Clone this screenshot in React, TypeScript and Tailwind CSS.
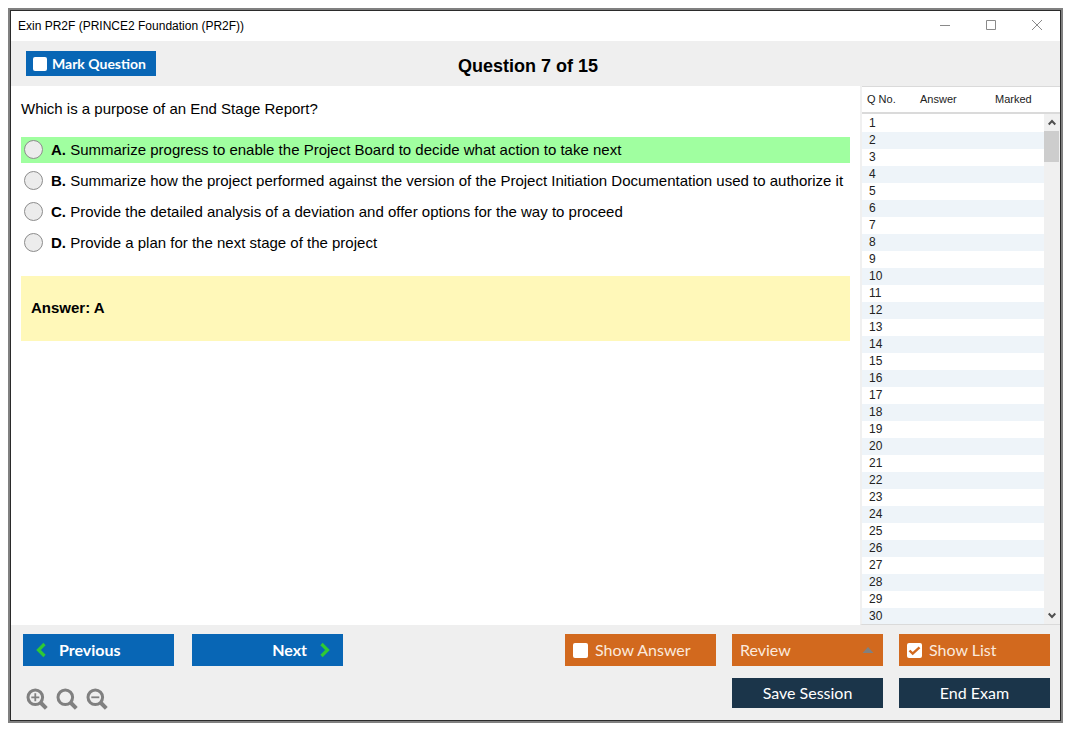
import { useState } from 'react';
import type { ReactNode } from 'react';

interface Option {
  letter: string;
  text: string;
  correct?: boolean;
}

const options: Option[] = [
  { letter: 'A', text: 'Summarize progress to enable the Project Board to decide what action to take next', correct: true },
  { letter: 'B', text: 'Summarize how the project performed against the version of the Project Initiation Documentation used to authorize it' },
  { letter: 'C', text: 'Provide the detailed analysis of a deviation and offer options for the way to proceed' },
  { letter: 'D', text: 'Provide a plan for the next stage of the project' },
];

const questionNumbers = Array.from({ length: 30 }, (_, i) => i + 1);

function Magnifier({ children }: { children?: ReactNode }) {
  return (
    <svg viewBox="0 0 22 22" className="h-[22px] w-[22px]" fill="none" stroke="#808080">
      <circle cx="9.3" cy="9.3" r="7.3" strokeWidth="3" />
      <path d="M14.5 14.5l5.8 5.8" strokeWidth="4" />
      {children}
    </svg>
  );
}

function CheckBox({ checked, onChange, small }: { checked: boolean; onChange: () => void; small?: boolean }) {
  return (
    <span className="grid place-items-center">
      <input
        type="checkbox"
        checked={checked}
        onChange={onChange}
        className={`col-start-1 row-start-1 appearance-none rounded-xs bg-white ${small ? 'h-[14px] w-[14px]' : 'h-[15px] w-[15px]'}`}
      />
      {checked && (
        <svg viewBox="0 0 15 15" className="pointer-events-none col-start-1 row-start-1 h-[15px] w-[15px]" fill="none" stroke="#d2691e" strokeWidth="2.4">
          <path d="M2.5 7.5l3.2 3.2 6.8-6.4" />
        </svg>
      )}
    </span>
  );
}

function ScrollBar() {
  return (
    <div className="flex w-4 flex-col bg-[#f0f0f0]">
      <div className="h-7 shrink-0 border-t border-b-2 border-[#dadada] bg-white" />
      <button aria-label="Scroll up" className="flex h-[17px] shrink-0 items-center justify-center">
        <svg viewBox="0 0 8 7" className="h-[7px] w-2" fill="none" stroke="#505050" strokeWidth="2">
          <path d="M0.7 5.5L4 2l3.3 3.5" />
        </svg>
      </button>
      <div className="mr-px h-[31px] bg-[#cdcdcd]" />
      <button aria-label="Scroll down" className="mt-auto flex h-[17px] shrink-0 items-center justify-center">
        <svg viewBox="0 0 8 7" className="h-[7px] w-2" fill="none" stroke="#505050" strokeWidth="2">
          <path d="M0.7 1.5L4 5l3.3-3.5" />
        </svg>
      </button>
    </div>
  );
}

export default function App() {
  const [marked, setMarked] = useState(false);
  const [showAnswer, setShowAnswer] = useState(false);
  const [showList, setShowList] = useState(true);
  const [selected, setSelected] = useState('');

  return (
    <div className="h-screen bg-white pt-2 pr-3 pb-3 pl-2 font-['Liberation_Sans',Arial,sans-serif] text-black">
      <div className="h-full border-2 border-[#808080]">
        <div className="flex h-full flex-col border border-[#2b2b2b] bg-[#efefef]">
          {/* Title bar */}
          <header className="flex h-[30px] shrink-0 items-center justify-between bg-white pr-4 pl-[7px]">
            <span className="text-xs">Exin PR2F (PRINCE2 Foundation (PR2F))</span>
            <div className="flex gap-8">
              <button aria-label="Minimize" className="flex w-[14px] items-center justify-center">
                <svg viewBox="0 0 12 12" className="h-3 w-3" stroke="#8a8a8a">
                  <path d="M1 5.5h10" />
                </svg>
              </button>
              <button aria-label="Maximize" className="flex w-[14px] items-center justify-center">
                <svg viewBox="0 0 12 12" className="h-3 w-3" fill="none" stroke="#8a8a8a">
                  <path d="M1.5 0.5h9v9h-9z" />
                </svg>
              </button>
              <button aria-label="Close" className="flex w-[14px] items-center justify-center">
                <svg viewBox="0 0 12 12" className="h-3 w-3" stroke="#8a8a8a">
                  <path d="M1 0l10 10M11 0L1 10" />
                </svg>
              </button>
            </div>
          </header>

          {/* Question header */}
          <div className="flex h-[45px] shrink-0 items-center pr-40 pl-[15px]">
            <label className="flex h-[25px] w-[130px] items-center gap-[5px] bg-[#0866b5] pl-[7px] font-[Lato,sans-serif] text-sm font-bold text-white">
              <CheckBox small checked={marked} onChange={() => setMarked(!marked)} />
              Mark Question
            </label>
            <h1 className="flex-1 pt-1 text-center text-lg font-bold">Question 7 of 15</h1>
          </div>

          <div className="flex min-h-0 flex-1">
            {/* Question */}
            <main className="min-w-0 flex-1 bg-white px-[10px] pt-[11px] text-[15px]">
              <p className="leading-6">Which is a purpose of an End Stage Report?</p>
              <div className="mt-4 flex flex-col gap-[5px]">
                {options.map((option) => (
                  <label
                    key={option.letter}
                    className={`flex min-h-[26px] items-center gap-2 pl-[3px] ${option.correct ? 'bg-[#a0ffa0]' : ''}`}
                  >
                    <input
                      type="radio"
                      name="answer"
                      value={option.letter}
                      checked={selected === option.letter}
                      onChange={() => setSelected(option.letter)}
                      className="mb-px h-[19px] w-[19px] shrink-0 appearance-none rounded-full border border-[#8c8c8c] bg-[#ececec] checked:border-[6px] checked:border-[#0866b5]"
                    />
                    <span>
                      <b>{option.letter}.</b> {option.text}
                    </span>
                  </label>
                ))}
              </div>
              <div className="mt-5 flex h-[65px] items-center bg-[#fff8b9] px-[10px] font-bold">Answer: A</div>
            </main>

            {/* Question list */}
            {showList && (
              <aside className="flex w-[200px] shrink-0 overflow-hidden border-b border-l-2 border-b-[#dadada] border-l-[#f0f0f0] bg-white">
                <div className="min-w-0 flex-1">
                  <table className="w-full table-fixed border-separate border-spacing-0 text-left text-[11px] text-[#222222]">
                    <thead>
                      <tr className="h-7">
                        <th className="w-[53px] border-t border-b-2 border-[#dadada] pl-[5px] font-normal">Q No.</th>
                        <th className="w-[75px] border-t border-b-2 border-[#dadada] pl-[5px] font-normal">Answer</th>
                        <th className="border-t border-b-2 border-[#dadada] pl-[5px] font-normal">Marked</th>
                      </tr>
                    </thead>
                    <tbody className="text-xs">
                      {questionNumbers.map((n) => (
                        <tr key={n} className="h-[17px] leading-[17px] first:h-[18px] even:bg-[#eef4f9]">
                          <td className="pl-[7px]">{n}</td>
                          <td></td>
                          <td></td>
                        </tr>
                      ))}
                    </tbody>
                  </table>
                </div>
                <ScrollBar />
              </aside>
            )}
          </div>

          {/* Footer */}
          <footer className="flex shrink-0 flex-col gap-3 pt-[9px] pr-[10px] pb-3 pl-3 font-[Lato,sans-serif] text-base">
            <div className="flex justify-between">
              <div className="flex gap-[18px]">
                <button className="flex h-8 w-[151px] items-center gap-3 bg-[#0866b5] pl-3 font-bold text-white">
                  <svg viewBox="0 0 12 16" className="h-4 w-3" fill="none" stroke="#2fc934" strokeWidth="3.2">
                    <path d="M9.5 2L3.5 8l6 6" />
                  </svg>
                  Previous
                </button>
                <button className="flex h-8 w-[151px] items-center justify-end gap-3 bg-[#0866b5] pr-3 font-bold text-white">
                  Next
                  <svg viewBox="0 0 12 16" className="h-4 w-3" fill="none" stroke="#2fc934" strokeWidth="3.2">
                    <path d="M2.5 2l6 6-6 6" />
                  </svg>
                </button>
              </div>
              <div className="flex gap-4">
                <label className="flex h-8 w-[151px] items-center gap-[7px] bg-[#d2691e] pl-2 text-[#fbe9dd]">
                  <CheckBox checked={showAnswer} onChange={() => setShowAnswer(!showAnswer)} />
                  Show Answer
                </label>
                <button aria-haspopup="menu" className="flex h-8 w-[151px] items-center justify-between bg-[#d2691e] pr-[9px] pl-2 text-[#fbe9dd]">
                  Review
                  <svg viewBox="0 0 12 6" className="h-[6px] w-3" fill="#808080">
                    <path d="M6 0l5.5 6h-11z" />
                  </svg>
                </button>
                <label className="flex h-8 w-[151px] items-center gap-[7px] bg-[#d2691e] pl-2 text-[#fbe9dd]">
                  <CheckBox checked={showList} onChange={() => setShowList(!showList)} />
                  Show List
                </label>
              </div>
            </div>
            <div className="flex justify-between">
              <div className="flex items-end gap-2 pt-[10px] pl-[3px]">
                <button aria-label="Zoom in" className="h-5">
                  <Magnifier>
                    <path d="M5.3 9.3h8M9.3 5.3v8" strokeWidth="1.8" />
                  </Magnifier>
                </button>
                <button aria-label="Reset zoom" className="h-5">
                  <Magnifier />
                </button>
                <button aria-label="Zoom out" className="h-5">
                  <Magnifier>
                    <path d="M5.3 9.3h8" strokeWidth="1.8" />
                  </Magnifier>
                </button>
              </div>
              <div className="flex gap-4 text-white">
                <button className="h-[30px] w-[151px] bg-[#1b354a]">Save Session</button>
                <button className="h-[30px] w-[151px] bg-[#1b354a]">End Exam</button>
              </div>
            </div>
          </footer>
        </div>
      </div>
    </div>
  );
}
